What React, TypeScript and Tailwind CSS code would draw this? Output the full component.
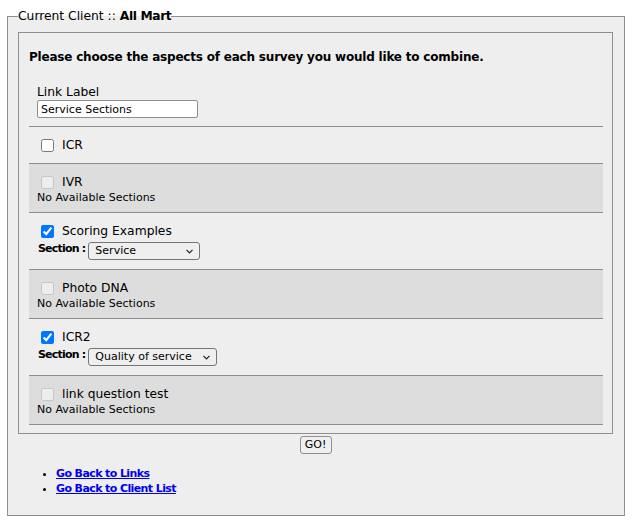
import { useState } from "react";

type Survey = {
    name: string;
    checked: boolean;
    sections: string[] | null;
    selectWidth?: string;
};

const surveys: Survey[] = [
    { name: "ICR", checked: false, sections: [] },
    { name: "IVR", checked: false, sections: null },
    { name: "Scoring Examples", checked: true, sections: ["Service"], selectWidth: "w-[112px]" },
    { name: "Photo DNA", checked: false, sections: null },
    { name: "ICR2", checked: true, sections: ["Quality of service"], selectWidth: "w-[129px]" },
    { name: "link question test", checked: false, sections: null },
];

function SurveyRow({ survey, gray }: { survey: Survey; gray: boolean }) {
    const [checked, setChecked] = useState<boolean>(survey.checked);
    const disabled = survey.sections === null;

    return (
        <div className={`px-2 py-2 border-b border-[#8f8f8f] ${gray ? "bg-[#dddddd]" : ""}`}>
            <label className="flex items-center h-5 text-[12.3px]">
                <input
                    type="checkbox"
                    className="ml-[4px] mr-[3px] w-[13px] h-[13px]"
                    checked={checked}
                    disabled={disabled}
                    onChange={(e) => setChecked(e.target.checked)}
                />
                <span className="ml-[5px]">{survey.name}</span>
            </label>

            {disabled && <div className="text-[11px] leading-3">No Available Sections</div>}

            {survey.sections && survey.sections.length > 0 && (
                <div className="flex items-center h-5 text-[11px]">
                    <span className="font-bold tracking-[-0.8px] pb-[3px] pl-[1px]">Section :</span>
                    <div className="relative ml-[3px]">
                        <select
                            className={`${survey.selectWidth} h-[18px] appearance-none border border-[#767676] rounded-[3px] bg-[#efefef] pl-[6px] text-[11px] leading-4`}
                            defaultValue={survey.sections[0]}
                        >
                            {survey.sections.map((s) => (
                                <option key={s}>{s}</option>
                            ))}
                        </select>
                        <svg
                            className="absolute right-[7px] top-[7px] pointer-events-none"
                            width="7"
                            height="5"
                            viewBox="0 0 7 5"
                        >
                            <path d="M0.5 0.8 L3.5 3.8 L6.5 0.8" fill="none" stroke="#222" strokeWidth="1.2" />
                        </svg>
                    </div>
                </div>
            )}
        </div>
    );
}

function App() {
    const [label, setLabel] = useState<string>("Service Sections");

    return (
        <div className="min-h-[526px] bg-white pt-2 text-black font-['DejaVu_Sans',Verdana,sans-serif] text-[12.3px]">
            <fieldset className="mx-[7px] border border-[#8f8f8f] bg-[#eeeeee] pt-2 pl-[10px] pr-[11px] pb-[19px]">
                <legend className="px-0 leading-4">
                    Current Client :: <b className="tracking-[-0.4px]">All Mart</b>
                </legend>

                <fieldset className="border border-[#8f8f8f] pl-[10px] pr-[9px] pb-[8px]">
                    <p className="mt-4 font-bold text-[12px] tracking-[-0.2px] leading-4">
                        Please choose the aspects of each survey you would like to combine.
                    </p>

                    <div className="mt-[18px] px-2 pb-2 border-b border-[#8f8f8f]">
                        <div className="leading-4 pt-[1px]">Link Label</div>
                        <input
                            type="text"
                            className="block w-[161px] h-[18px] border border-[#8f8f8f] rounded-[2px] bg-white px-[3px] text-[11px]"
                            value={label}
                            onChange={(e) => setLabel(e.target.value)}
                        />
                    </div>

                    {surveys.map((s, i) => (
                        <SurveyRow key={s.name} survey={s} gray={i % 2 === 1} />
                    ))}
                </fieldset>

                <div className="mt-[1px] text-center">
                    <button className="w-[32px] h-[18px] border border-[#8f8f8f] rounded-[3px] bg-[#efefef] text-[11px] leading-4">
                        GO!
                    </button>
                </div>

                <ul className="mt-3 pl-[38px] list-disc text-[11px] font-bold tracking-[-0.6px] leading-[15px]">
                    <li>
                        <a href="#" className="text-[#0000ee] underline">Go Back to Links</a>
                    </li>
                    <li>
                        <a href="#" className="text-[#0000ee] underline">Go Back to Client List</a>
                    </li>
                </ul>
            </fieldset>
        </div>
    );
}

export default App;
